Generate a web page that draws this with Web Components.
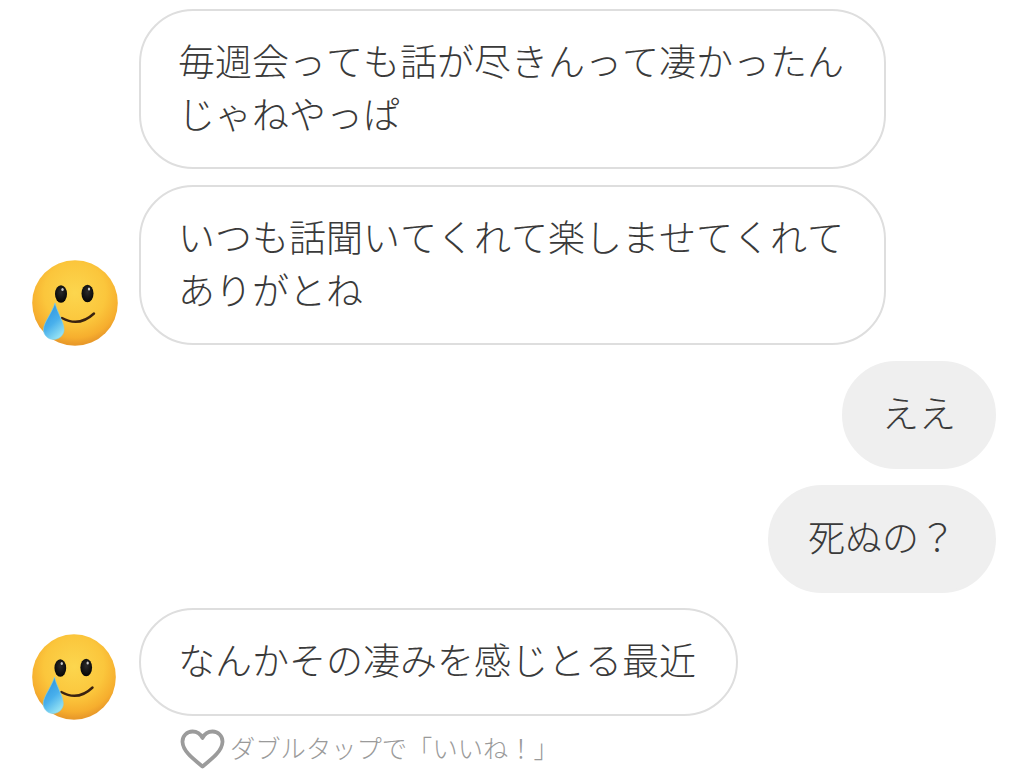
<!DOCTYPE html>
<html lang="ja"><head><meta charset="utf-8"><title>Chat</title>
<style>
html,body{margin:0;background:#fff;overflow:hidden}
body{font-family:"Noto Sans CJK JP","Noto Sans",sans-serif;color:#363636;font-kerning:none}
</style></head><body>
<chat-thread>
  <chat-row><chat-bubble kind="in">毎週会っても話が尽きんって凄かったん<br>じゃねやっぱ</chat-bubble></chat-row>
  <chat-row avatar><chat-bubble kind="in">いつも話聞いてくれて楽しませてくれて<br>ありがとね</chat-bubble></chat-row>
  <chat-row out><chat-bubble kind="out">ええ</chat-bubble></chat-row>
  <chat-row out><chat-bubble kind="out">死ぬの？</chat-bubble></chat-row>
  <chat-row avatar style="--sink:-5px;--w:86px;margin-top:-1px"><chat-bubble kind="in">なんかその凄みを感じとる最近</chat-bubble></chat-row>
  <like-hint>ダブルタップで「いいね！」</like-hint>
</chat-thread>
<script>
function def(name,html){
  customElements.define(name,class extends HTMLElement{
    constructor(){super();this.attachShadow({mode:'open'}).innerHTML=html;}
  });
}
def('chat-thread',`<style>:host{display:flex;flex-direction:column;gap:16px;padding:9px 28px 0 32px;width:964px}</style><slot></slot>`);
def('smile-tear',`<style>:host{display:block;width:88px;height:88px}svg{display:block;width:var(--w,88px);height:88px}</style>
<svg viewBox="0 0 88 88" preserveAspectRatio="none">
<defs>
<radialGradient id="f" cx="50%" cy="38%" r="60%"><stop offset="0" stop-color="#fcd64e"/><stop offset=".6" stop-color="#fbc63c"/><stop offset=".88" stop-color="#f6ae2e"/><stop offset="1" stop-color="#e99a2a"/></radialGradient>
<linearGradient id="d" x1=".2" y1="0" x2=".7" y2="1"><stop offset="0" stop-color="#2a90dc"/><stop offset=".55" stop-color="#49b0ec"/><stop offset="1" stop-color="#9ae6f4"/></linearGradient>
<radialGradient id="e" cx="50%" cy="40%" r="60%"><stop offset="0" stop-color="#2a2a2a"/><stop offset="1" stop-color="#050505"/></radialGradient>
</defs>
<circle cx="44" cy="44" r="42.800" fill="url(#f)"/>
<ellipse cx="30" cy="35" rx="6" ry="8.800" fill="url(#e)"/><ellipse cx="31.500" cy="30.500" rx="1.200" ry="1.500" fill="#c8c8c8"/>
<ellipse cx="56.500" cy="34.500" rx="6" ry="8.800" fill="url(#e)"/><ellipse cx="58" cy="30" rx="1.200" ry="1.500" fill="#c8c8c8"/>
<path d="M31 59Q48 68.500 63 54.500" fill="none" stroke="#3a2210" stroke-width="2.400" stroke-linecap="round"/>
<path d="M24 44C21 54 13 63 12.500 70C12.200 76 17 80.500 22.500 80.500C29 80.500 33.500 75 33 70C32.500 62 26 53 24 44Z" fill="url(#d)" stroke="#7fd2ee" stroke-width=".6"/>
</svg>`);
def('chat-row',`<style>:host{display:flex;align-items:flex-end;gap:21px}
:host([out]){justify-content:flex-end}
.a{width:88px;height:88px;flex:none;margin:0 -1px var(--sink,-2px) -1px}
:host([out]) .a{display:none}
:host(:not([avatar])) smile-tear{display:none}
</style><div class="a"><smile-tear></smile-tear></div><slot></slot>`);
def('chat-bubble',`<style>:host{display:block;box-sizing:border-box;min-height:108px;padding:23px 40px 27px 37px;font-size:37px;line-height:53px;font-weight:300;white-space:nowrap;border-radius:54px;border:2px solid #dedede;background:#fff;color:#3a3a3a}
:host([kind=out]){background:#efefef;border-color:#efefef;padding-left:38px;padding-right:38px}
</style><slot></slot>`);
def('like-hint',`<style>:host{display:flex;align-items:flex-start;gap:5px;margin:-3px 0 0 148px;font-size:25.300px;line-height:37px;font-weight:300;color:#9a9a9a;white-space:nowrap}
svg{display:block;flex:none}</style>
<svg width="45" height="40" viewBox="0 0 45 40"><path d="M22.500 37.500C12 29 3 22 2.500 13C2.200 7 7 2.500 12.500 2.500C17 2.500 20.500 5 22.500 9C24.500 5 28 2.500 32.500 2.500C38 2.500 42.800 7 42.500 13C42 22 33 29 22.500 37.500Z" fill="none" stroke="#9b9b9b" stroke-width="3.800" stroke-linejoin="round"/></svg><slot></slot>`);
</script>
</body></html>
